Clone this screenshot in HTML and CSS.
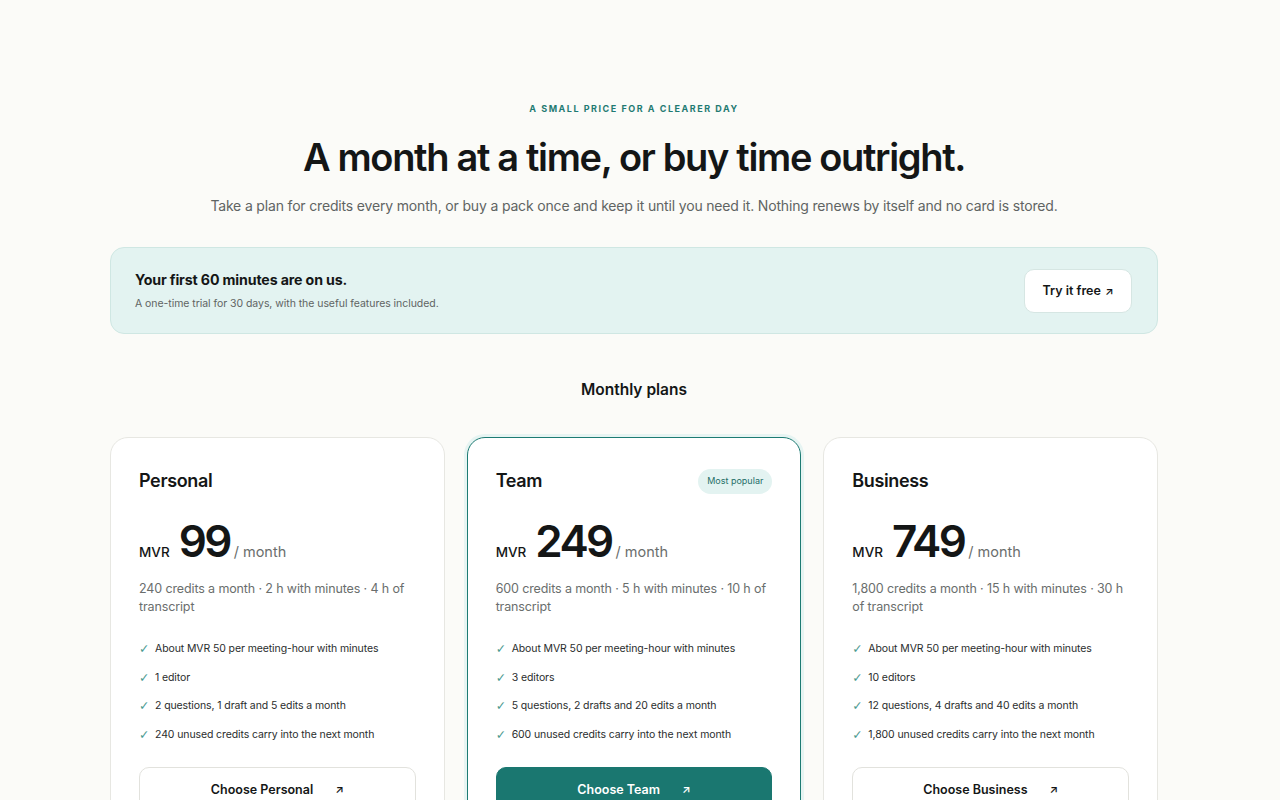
FILE: index.html
```html
<!DOCTYPE html>
<html lang="en">
<head>
<meta charset="utf-8">
<title>Pricing</title>
<link rel="stylesheet" href="styles.css">
</head>
<body>
<main class="page">
  <header class="hero">
    <p class="eyebrow">A small price for a clearer day</p>
    <h1 class="title">A month at a time, or buy time outright.</h1>
    <p class="lede">Take a plan for credits every month, or buy a pack once and keep it until you need it. Nothing renews by itself and no card is stored.</p>
  </header>

  <section class="trial">
    <div class="trial-text">
      <h2 class="trial-title">Your first 60 minutes are on us.</h2>
      <p class="trial-sub">A one-time trial for 30 days, with the useful features included.</p>
    </div>
    <a class="trial-btn" href="#">Try it free <span class="arrow">↗</span></a>
  </section>

  <h2 class="section-title">Monthly plans</h2>

  <section class="plans">
    <article class="plan">
      <div class="plan-head">
        <h3 class="plan-name">Personal</h3>
      </div>
      <div class="price"><span class="cur">MVR</span><span class="amt">99</span><span class="per">/ month</span></div>
      <p class="plan-desc">240 credits a month · 2 h with minutes · 4 h of transcript</p>
      <ul class="features">
        <li><span class="check">✓</span>About MVR 50 per meeting-hour with minutes</li>
        <li><span class="check">✓</span>1 editor</li>
        <li><span class="check">✓</span>2 questions, 1 draft and 5 edits a month</li>
        <li><span class="check">✓</span>240 unused credits carry into the next month</li>
      </ul>
      <a class="plan-btn" href="#">Choose Personal <span class="arrow">↗</span></a>
    </article>

    <article class="plan plan-featured">
      <div class="plan-head">
        <h3 class="plan-name">Team</h3>
        <span class="badge">Most popular</span>
      </div>
      <div class="price"><span class="cur">MVR</span><span class="amt">249</span><span class="per">/ month</span></div>
      <p class="plan-desc">600 credits a month · 5 h with minutes · 10 h of transcript</p>
      <ul class="features">
        <li><span class="check">✓</span>About MVR 50 per meeting-hour with minutes</li>
        <li><span class="check">✓</span>3 editors</li>
        <li><span class="check">✓</span>5 questions, 2 drafts and 20 edits a month</li>
        <li><span class="check">✓</span>600 unused credits carry into the next month</li>
      </ul>
      <a class="plan-btn plan-btn-primary" href="#">Choose Team <span class="arrow">↗</span></a>
    </article>

    <article class="plan">
      <div class="plan-head">
        <h3 class="plan-name">Business</h3>
      </div>
      <div class="price"><span class="cur">MVR</span><span class="amt">749</span><span class="per">/ month</span></div>
      <p class="plan-desc">1,800 credits a month · 15 h with minutes · 30 h of transcript</p>
      <ul class="features">
        <li><span class="check">✓</span>About MVR 50 per meeting-hour with minutes</li>
        <li><span class="check">✓</span>10 editors</li>
        <li><span class="check">✓</span>12 questions, 4 drafts and 40 edits a month</li>
        <li><span class="check">✓</span>1,800 unused credits carry into the next month</li>
      </ul>
      <a class="plan-btn" href="#">Choose Business <span class="arrow">↗</span></a>
    </article>
  </section>
</main>
</body>
</html>
```

FILE: styles.css
```css
* { box-sizing: border-box; }

html, body {
  margin: 0;
  padding: 0;
  background: #fbfbf8;
  color: #141616;
  font-family: Inter, "Noto Sans", "Liberation Sans", sans-serif;
}

body {
  padding-right: 12px;
}

.page {
  width: 1048px;
  margin: 0 auto;
  padding-top: 103px;
}

.hero {
  text-align: center;
}

.eyebrow {
  margin: 0;
  font-size: 9px;
  font-weight: 700;
  letter-spacing: 0.17em;
  text-transform: uppercase;
  color: #1f7a72;
  line-height: 12px;
}

.title {
  margin: 18px 0 0;
  font-size: 38px;
  line-height: 48px;
  font-weight: 600;
  letter-spacing: -0.035em;
  color: #141616;
}

.lede {
  margin: 14px 0 0;
  font-size: 14px;
  line-height: 22px;
  letter-spacing: -0.012em;
  color: #5f6463;
}

.trial {
  margin-top: 30px;
  height: 87px;
  background: #e3f3f1;
  border: 1px solid #cfe7e3;
  border-radius: 14px;
  display: flex;
  align-items: center;
  justify-content: space-between;
  padding: 0 25px 0 24px;
}

.trial-title {
  margin: 0;
  font-size: 14.2px;
  line-height: 20px;
  font-weight: 700;
  letter-spacing: -0.01em;
  color: #141616;
}

.trial-sub {
  margin: 6px 0 0;
  font-size: 10.5px;
  line-height: 16px;
  letter-spacing: -0.005em;
  color: #5f6463;
}

.trial-btn {
  display: inline-flex;
  align-items: center;
  justify-content: center;
  gap: 4px;
  width: 108px;
  height: 44px;
  background: #ffffff;
  border: 1px solid #d6e6e3;
  border-radius: 10px;
  font-size: 12.5px;
  font-weight: 600;
  color: #141616;
  text-decoration: none;
}

.arrow {
  font-size: 11px;
}

.section-title {
  margin: 45px 0 0;
  text-align: center;
  font-size: 15.5px;
  line-height: 22px;
  font-weight: 600;
}

.plans {
  margin-top: 36px;
  display: grid;
  grid-template-columns: repeat(3, 1fr);
  gap: 22px;
}

.plan {
  background: #ffffff;
  border: 1px solid #e7e7e2;
  border-radius: 18px;
  padding: 30px 28px 28px;
  display: flex;
  flex-direction: column;
}

.plan-featured {
  border-color: #1d7b73;
  box-shadow: 0 0 0 3px #e6f4f2;
}

.plan-head {
  display: flex;
  align-items: center;
  justify-content: space-between;
  height: 26px;
}

.plan-name {
  margin: 0;
  font-size: 18px;
  font-weight: 600;
  line-height: 26px;
  letter-spacing: -0.02em;
}

.badge {
  background: #e3f3f1;
  color: #1f6f68;
  font-size: 9px;
  line-height: 12px;
  padding: 6.5px 9px;
  border-radius: 13px;
}

.price {
  margin-top: 25px;
  display: flex;
  align-items: baseline;
  line-height: 44px;
}

.cur {
  font-size: 13.5px;
  font-weight: 500;
  margin-right: 9px;
}

.amt {
  font-size: 44px;
  font-weight: 600;
  letter-spacing: -0.06em;
  margin-right: 4px;
}

.per {
  font-size: 14.5px;
  color: #6a6e6d;
}

.plan-desc {
  margin: 6px 0 0;
  font-size: 12.5px;
  line-height: 18px;
  letter-spacing: -0.01em;
  color: #6a6e6d;
}

.features {
  list-style: none;
  margin: 25px 0 0;
  padding: 0;
  display: flex;
  flex-direction: column;
  gap: 12px;
}

.features li {
  display: flex;
  align-items: center;
  font-size: 10.5px;
  line-height: 16.5px;
  letter-spacing: -0.01em;
  color: #2a2d2d;
}

.check {
  width: 16px;
  flex: none;
  color: #4a9a8f;
  font-family: "DejaVu Sans", sans-serif;
  font-size: 12.5px;
  line-height: 16px;
}

.plan-btn {
  margin-top: 24px;
  height: 44px;
  display: flex;
  align-items: center;
  justify-content: center;
  gap: 22px;
  border: 1px solid #e2e2dd;
  border-radius: 10px;
  font-size: 12.5px;
  font-weight: 600;
  color: #141616;
  text-decoration: none;
}

.plan-btn-primary {
  background: #1a7770;
  border-color: #1a7770;
  color: #ffffff;
}
```
